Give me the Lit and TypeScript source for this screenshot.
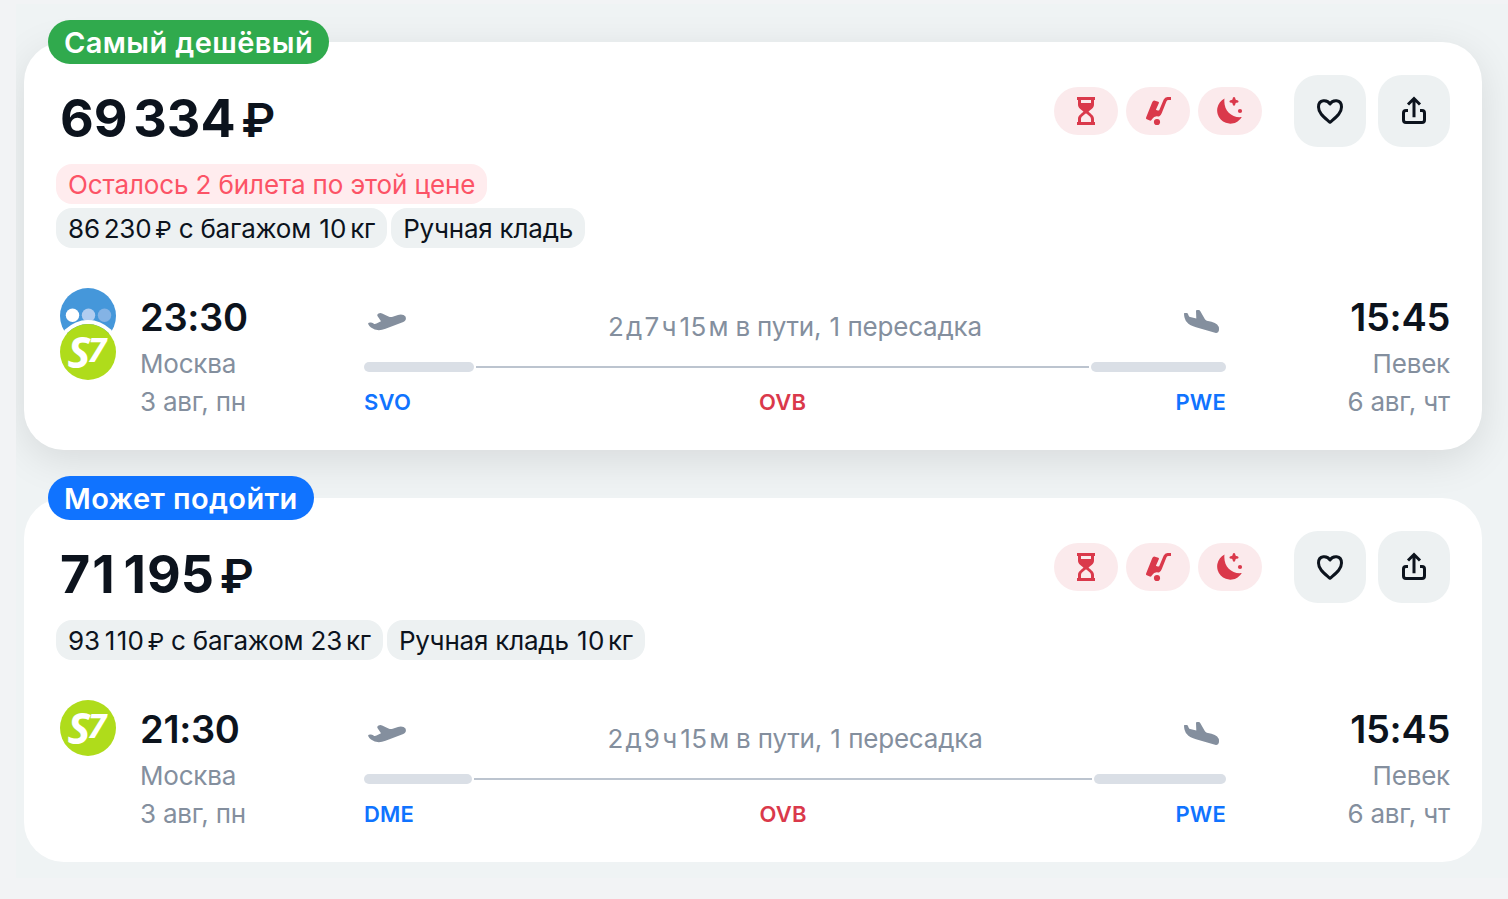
import { LitElement, html, svg, css } from 'lit';
import { customElement, property } from 'lit/decorators.js';

interface Ticket {
  badge: string;
  tone: 'green' | 'blue';
  price: string;
  warning?: string;
  chips: string[];
  carriers: string[];
  depart: string;
  arrive: string;
  duration: string;
  from: string;
  firstLeg: number;
  lastLeg: number;
}

const TICKETS: Ticket[] = [
  {
    badge: 'Самый дешёвый',
    tone: 'green',
    price: '69\u2009334\u2009₽',
    warning: 'Осталось 2 билета по этой цене',
    chips: ['86\u2009230\u2009₽ с багажом 10\u2009кг', 'Ручная кладь'],
    carriers: ['dots', 's7'],
    depart: '23:30',
    arrive: '15:45',
    duration: '2\u2009д\u20097\u2009ч\u200915\u2009м в пути, 1 пересадка',
    from: 'SVO',
    firstLeg: 110,
    lastLeg: 135,
  },
  {
    badge: 'Может подойти',
    tone: 'blue',
    price: '71\u2009195\u2009₽',
    chips: ['93\u2009110\u2009₽ с багажом 23\u2009кг', 'Ручная кладь 10\u2009кг'],
    carriers: ['s7'],
    depart: '21:30',
    arrive: '15:45',
    duration: '2\u2009д\u20099\u2009ч\u200915\u2009м в пути, 1 пересадка',
    from: 'DME',
    firstLeg: 108,
    lastLeg: 132,
  },
];

const icons = {
  hourglass: svg`<path fill="currentColor" fill-rule="evenodd" d="M7 2h18v3h-1v4.500c0 3.500-3 4.800-5.500 7.200C21 19 24 20.500 24 24v3h1v3H7v-3h1v-3c0-3.500 3-5 5.500-7.300C11 14.300 8 13 8 9.500V5H7zM11 5v3h10V5zM11 27h10v-3c0-2.500-3-4-5-5.800-2 1.800-5 3.300-5 5.800z"/>`,
  luggage: svg`<path fill="currentColor" d="M13 5.700l3.300 1q1 .3.600 1.300l-3 6.700q1.600 1.300 3.300.5l4.400-10.400Q22.900 2 25.500 2H29v3h-2.500Q25 5 24.400 6.400L19.800 18q-1 2.800-2.800 3.600-4.500-1.600-6.800 2.400l-.9 1.300q-.6.700-1.500.3l-3-1.300q-1.200-.6-.7-1.900L10.200 7.200q.8-2 2.800-1.500z"/><circle fill="currentColor" cx="15" cy="27" r="3.100"/>`,
  moon: svg`<path fill="currentColor" d="M10.500 3.600A13.200 13.200 0 1 0 27.800 22C17.500 23.300 9 15 10.500 3.600zM20 2q1.300 0 1.500 2.300.2.700.9.800 2.200.2 2.200 1.300t-2.200 1.300q-.7.100-.9.800Q21.300 10.800 20 10.800t-1.500-2.300q-.2-.7-.9-.8-2.200-.2-2.200-1.300t2.200-1.300q.7-.1.900-.8Q18.700 2 20 2z"/><circle fill="currentColor" cx="26" cy="16" r="2.100"/>`,
  heart: svg`<path fill="none" stroke="currentColor" stroke-width="3" stroke-linejoin="round" d="M16 9C13.500 4.500 4.500 3.800 4.500 12 4.500 18.500 10.500 22.500 16 27.300 21.500 22.500 27.500 18.500 27.500 12 27.500 3.800 18.500 4.500 16 9z"/>`,
  share: svg`<path fill="none" stroke="currentColor" stroke-width="3" d="M10 15.500H8A2.500 2.500 0 0 0 5.500 18v7A2.500 2.500 0 0 0 8 27.500h16a2.500 2.500 0 0 0 2.500-2.500v-7a2.500 2.500 0 0 0-2.500-2.500h-2M16 22.300V4.500M10 9.500l6-6 6 6"/>`,
};

const takeoff = svg`<path fill="currentColor" d="M4 17.800q.6-1.700 3-1.300 2 .1 3.200 1.400 1 .4 2.300-.3l4.500-2.400-3.700-5.400q-.4-1.600 1.200-2.300 1.800-1 3.600-.1l6.400 3q2.200 1.200 4.200.3l5.300-1.800Q39.500 7.900 41.500 10.500q1.500 3.500-2.200 5.600L21.500 22.800q-8.500 3.200-14.500-1.300-2-1.500-3-3.700z"/>`;

const landing = svg`<path fill="currentColor" d="M2 7.600Q2 7 2.600 7h2.200q.8 0 1.100.8l.9 2.100q.4 1 1.400 1.200l6.100 1.300L14 5q0-1 1-1h1.700q1 0 1.500.9l4.600 8.200q.7 1.300 2 1.600l4.700 1q7.500 1.800 7.500 7.300l-.1 1.500q-.4 2.700-3 2.400L14 21.200Q2 18.500 2 7.600z"/>`;

const PART_CLASSES: Record<string, string> = {
  '\u2009': 'thin',
  '₽': 'ruble',
  '1': 'one',
};

// Thin spaces, the narrow "1" and the ruble sign get their own metrics
const amount = (text: string) =>
  text
    .split(/(\u2009|₽|1)/)
    .map((part) => (PART_CLASSES[part] ? html`<span class=${PART_CLASSES[part]}>${part}</span>` : part));

@customElement('carrier-logo')
class CarrierLogo extends LitElement {
  @property() name = 's7';

  static styles = css`
    :host {
      display: block;
      width: 56px;
      height: 56px;
      border-radius: 50%;
    }

    svg {
      display: block;
      overflow: visible;
    }

    .mark {
      font-family: 'Open Sans', sans-serif;
      font-weight: 700;
      font-style: italic;
      fill: #fff;
    }

    .big {
      font-size: 43px;
    }

    .small {
      font-size: 34px;
    }
  `;

  render() {
    if (this.name === 'dots') {
      return html`
        <svg width="56" height="56" viewBox="0 0 56 56">
          <circle cx="28" cy="28" r="28" fill="#4597da" />
          <circle cx="12.500" cy="27.300" r="6.700" fill="#fff" />
          <circle cx="28.500" cy="27.300" r="6.700" fill="#b1cdf0" />
          <circle cx="44.500" cy="27.300" r="6.700" fill="#84b3e5" />
        </svg>
      `;
    }
    return html`
      <svg width="56" height="56" viewBox="0 0 56 56">
        <circle cx="28" cy="28" r="28" fill="#afdc1b" />
        <text class="mark big" x="7.500" y="43.500">S</text>
        <text class="mark small" x="27.500" y="38">7</text>
      </svg>
    `;
  }
}

@customElement('ticket-card')
class TicketCard extends LitElement {
  @property({ attribute: false }) ticket!: Ticket;

  static styles = css`
    :host {
      display: block;
      position: relative;
      box-sizing: border-box;
      padding: 33px 32px 29px;
      border-radius: 40px;
      background: #fff;
      color: #0c131d;
      white-space: nowrap;
    }

    :host([raised]) {
      box-shadow: 0 10px 40px rgba(0, 0, 0, 0.1);
    }

    svg {
      display: block;
    }

    .thin {
      display: inline-block;
      width: 0.11em;
    }

    .one {
      margin: 0 0.02em 0 0.04em;
    }

    .ruble {
      font-size: 0.9em;
    }

    .badge {
      position: absolute;
      top: -22px;
      left: 24px;
      height: 44px;
      padding: 0 16px;
      border-radius: 22px;
      color: #fff;
      font-size: 29px;
      font-weight: 600;
      line-height: 45px;
      letter-spacing: 0.4px;
    }

    .green {
      background: #30aa4d;
    }

    .blue {
      background: #1073ff;
    }

    .head {
      display: flex;
      align-items: flex-start;
      height: 89px;
    }

    .price {
      flex: 1;
      padding-left: 4px;
      font-size: 52px;
      font-weight: 700;
      font-kerning: none;
      line-height: 87px;
    }

    .price .ruble {
      font-weight: 600;
    }

    .perks {
      display: flex;
      gap: 8px;
      margin: 12px 32px 0 0;
    }

    .perk {
      display: grid;
      place-items: center;
      width: 64px;
      height: 48px;
      border-radius: 24px;
      background: #fbeaec;
      color: #da394b;
    }

    .actions {
      display: flex;
      gap: 12px;
    }

    .action {
      display: grid;
      place-items: center;
      width: 72px;
      height: 72px;
      padding: 0;
      border: 0;
      border-radius: 24px;
      background: #edf1f2;
      color: #0c131d;
    }

    .chips {
      display: flex;
      gap: 4px;
      margin-bottom: 4px;
    }

    .chip {
      height: 40px;
      padding: 0 12px;
      border-radius: 16px;
      background: #edf1f2;
      font-size: 26px;
      line-height: 42px;
      letter-spacing: -0.2px;
    }

    .chip .thin {
      width: 0.15em;
    }

    .warning {
      background: #ffecee;
      color: #fc5366;
      letter-spacing: -0.12px;
    }

    .segment {
      display: grid;
      grid-template-columns: 80px 224px 862px 1fr;
      margin: 36px 0 0 4px;
    }

    .carriers {
      padding-top: 4px;
    }

    .carriers carrier-logo + carrier-logo {
      position: relative;
      margin-top: -20px;
      box-shadow: 0 0 0 4px #fff;
    }

    .time {
      margin-bottom: -6px;
      font-size: 38px;
      font-weight: 600;
      line-height: 67px;
      letter-spacing: -0.3px;
    }

    .place {
      color: #848f9e;
      font-size: 26px;
      line-height: 38px;
      letter-spacing: -0.2px;
    }

    .end {
      text-align: right;
    }

    .sky {
      display: flex;
      justify-content: space-between;
      height: 78px;
      color: #848f9e;
    }

    .plane {
      margin-top: 22px;
    }

    .duration {
      font-size: 26px;
      line-height: 85px;
      letter-spacing: -0.2px;
    }

    .duration .thin {
      width: 0.09em;
    }

    .track {
      display: flex;
      align-items: center;
      gap: 2px;
    }

    .leg {
      height: 10px;
      border-radius: 5px;
      background: #dadfe6;
    }

    .stop {
      flex: 1;
      height: 2px;
      background: #bcc4cf;
    }

    .codes {
      display: flex;
      gap: 2px;
      margin-top: 11px;
      color: #1073ff;
      font-size: 22px;
      font-weight: 600;
      line-height: 38px;
      letter-spacing: 0.2px;
    }

    .transfer {
      flex: 1;
      color: #da394b;
      text-align: center;
    }

    .last {
      text-align: right;
    }
  `;

  icon(shape: unknown) {
    return html`<svg width="32" height="32" viewBox="0 0 32 32">${shape}</svg>`;
  }

  render() {
    const t = this.ticket;
    return html`
      <div class="badge ${t.tone}">${t.badge}</div>
      <div class="head">
        <div class="price">${amount(t.price)}</div>
        <div class="perks">
          <span class="perk">${this.icon(icons.hourglass)}</span>
          <span class="perk">${this.icon(icons.luggage)}</span>
          <span class="perk">${this.icon(icons.moon)}</span>
        </div>
        <div class="actions">
          <button class="action">${this.icon(icons.heart)}</button>
          <button class="action">${this.icon(icons.share)}</button>
        </div>
      </div>
      ${t.warning ? html`<div class="chips"><span class="chip warning">${t.warning}</span></div>` : ''}
      <div class="chips">${t.chips.map((chip) => html`<span class="chip">${amount(chip)}</span>`)}</div>
      <div class="segment">
        <div class="carriers">${t.carriers.map((name) => html`<carrier-logo name=${name}></carrier-logo>`)}</div>
        <div class="start">
          <div class="time">${t.depart}</div>
          <div class="place">Москва</div>
          <div class="place">3 авг, пн</div>
        </div>
        <div class="route">
          <div class="sky">
            <svg class="plane" width="44" height="32" viewBox="0 0 44 32">${takeoff}</svg>
            <span class="duration">${amount(t.duration)}</span>
            <svg class="plane" width="44" height="32" viewBox="0 0 44 32">${landing}</svg>
          </div>
          <div class="track">
            <div class="leg" style="width: ${t.firstLeg}px"></div>
            <div class="stop"></div>
            <div class="leg" style="width: ${t.lastLeg}px"></div>
          </div>
          <div class="codes">
            <span style="width: ${t.firstLeg}px">${t.from}</span>
            <span class="transfer">OVB</span>
            <span class="last" style="width: ${t.lastLeg}px">PWE</span>
          </div>
        </div>
        <div class="end">
          <div class="time">${t.arrive}</div>
          <div class="place">Певек</div>
          <div class="place">6 авг, чт</div>
        </div>
      </div>
    `;
  }
}

@customElement('app-root')
class AppRoot extends LitElement {
  static styles = css`
    :host {
      display: block;
      box-sizing: border-box;
      height: 899px;
      padding: 4px 0 0 16px;
      overflow: hidden;
      background: #f2f3f5;
      font-family: Inter, 'Liberation Sans', sans-serif;
    }

    .list {
      display: flex;
      flex-direction: column;
      gap: 48px;
      box-sizing: border-box;
      height: 874px;
      padding: 38px 26px 0 8px;
      overflow: hidden;
      background: #eff3f4;
    }
  `;

  render() {
    return html`
      <div class="list">
        ${TICKETS.map((ticket, i) => html`<ticket-card .ticket=${ticket} ?raised=${i === 0}></ticket-card>`)}
      </div>
    `;
  }
}
